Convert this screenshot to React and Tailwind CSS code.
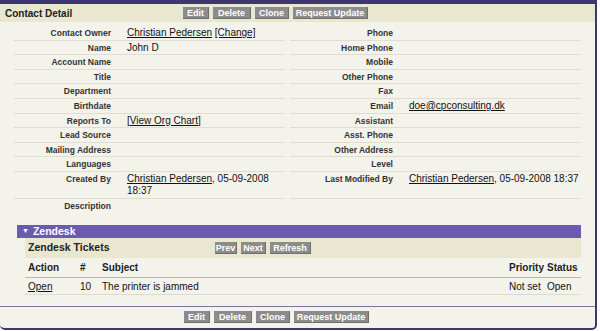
import * as React from "react"

const leftRows = [
  ["Contact Owner", "owner"],
  ["Name", "John D"],
  ["Account Name", ""],
  ["Title", ""],
  ["Department", ""],
  ["Birthdate", ""],
  ["Reports To", "org"],
  ["Lead Source", ""],
  ["Mailing Address", ""],
  ["Languages", ""],
  ["Created By", "created"],
  ["Description", ""],
]

const rightRows = [
  ["Phone", ""],
  ["Home Phone", ""],
  ["Mobile", ""],
  ["Other Phone", ""],
  ["Fax", ""],
  ["Email", "email"],
  ["Assistant", ""],
  ["Asst. Phone", ""],
  ["Other Address", ""],
  ["Level", ""],
  ["Last Modified By", "modified"],
  ["", ""],
]

const Btn = ({ label, w }) => (
  <div
    className={`${w} h-[12px] bg-[#8c8c8c] border-r border-b border-[#6e6e6e] text-white font-bold text-[9px] leading-[12px] text-center`}
  >
    {label}
  </div>
)

const Link = ({ children }) => <span className="underline">{children}</span>

const renderValue = (v) => {
  if (v === "owner")
    return (
      <>
        <Link>Christian Pedersen</Link> <Link>[Change]</Link>
      </>
    )
  if (v === "org") return <Link>[View Org Chart]</Link>
  if (v === "email") return <Link>doe@cpconsulting.dk</Link>
  if (v === "created")
    return (
      <>
        <div>
          <Link>Christian Pedersen</Link>, 05-09-2008
        </div>
        <div>18:37</div>
      </>
    )
  if (v === "modified")
    return (
      <>
        <Link>Christian Pedersen</Link>, 05-09-2008 18:37
      </>
    )
  return v
}

const MainButtons = () => (
  <div className="flex gap-[4px]">
    <Btn label="Edit" w="w-[26px]" />
    <Btn label="Delete" w="w-[38px]" />
    <Btn label="Clone" w="w-[34px]" />
    <Btn label="Request Update" w="w-[75px]" />
  </div>
)

const App = () => {
  const cells = []
  leftRows.forEach((row, i) => {
    const last = i === leftRows.length - 1
    const line = last ? "" : "border-b border-[#e0dfcf]"
    const right = rightRows[i]
    cells.push(
      <div key={"l" + i} className={`${line} pt-[1px] pb-[0.6px] pr-[4px] text-right font-bold text-[8.5px] leading-[12px] text-[#333]`}>
        {row[0]}
      </div>,
      <div key={"d" + i} className={`${line} mr-[5px] pt-[1px] pb-[0.6px] pl-[12px] whitespace-nowrap text-[10px] leading-[12px] text-[#111]`}>
        {renderValue(row[1])}
      </div>,
      <div key={"r" + i} className={`${line} pt-[1px] pb-[0.6px] pr-[4px] text-right font-bold text-[8.5px] leading-[12px] text-[#333]`}>
        {right[0]}
      </div>,
      <div key={"e" + i} className={`${line} pt-[1px] pb-[0.6px] pl-[12px] whitespace-nowrap text-[10px] leading-[12px] text-[#111]`}>
        {renderValue(right[1])}
      </div>
    )
  })

  return (
    <div className="w-[600px] h-[331px] bg-white font-['Liberation_Sans',Arial,sans-serif]">
      <div className="w-[597px] bg-[#f3f3ec] border-t-4 border-r-2 border-b-2 border-[#3d3673] rounded-b-[5px]">
        <div className="h-[18px] bg-[#e9e7cf] flex items-center">
          <div className="w-[183px] pl-[5px] font-bold text-[10px] text-[#222]">Contact Detail</div>
          <MainButtons />
        </div>

        <div className="pt-[4px] pl-[14px] grid grid-cols-[101px_175px_107px_184px]">{cells}</div>

        <div className="mt-[13px] ml-[17px] w-[564px] h-[13px] bg-[#6b5bb0] flex items-center pl-[5px] text-white font-bold text-[10.5px]">
          <span className="text-[7px] mr-[4px]">▼</span>
          Zendesk
        </div>
        <div className="ml-[25px] w-[556px]">
          <div className="h-[20px] bg-[#e9e7cf] flex items-center">
            <div className="w-[190px] pl-[3px] font-bold text-[10.5px] text-[#222]">Zendesk Tickets</div>
            <div className="flex gap-[4px]">
              <Btn label="Prev" w="w-[22px]" />
              <Btn label="Next" w="w-[25px]" />
              <Btn label="Refresh" w="w-[41px]" />
            </div>
          </div>
          <div className="h-[20px] border-b border-[#b9b8aa] grid grid-cols-[52px_22px_1fr_38px_34px] items-center pl-[3px] font-bold text-[10px] text-[#222]">
            <div>Action</div>
            <div>#</div>
            <div>Subject</div>
            <div>Priority</div>
            <div>Status</div>
          </div>
          <div className="h-[17px] border-b border-[#dcdbcc] grid grid-cols-[52px_22px_1fr_38px_34px] items-center pl-[3px] text-[10px] text-[#111]">
            <div className="underline">Open</div>
            <div>10</div>
            <div>The printer is jammed</div>
            <div>Not set</div>
            <div>Open</div>
          </div>
        </div>

        <div className="mt-[11px] border-t border-[#7a7599] pt-[4px] pb-[5px] pl-[184px]">
          <MainButtons />
        </div>
      </div>
    </div>
  )
}

export default App
